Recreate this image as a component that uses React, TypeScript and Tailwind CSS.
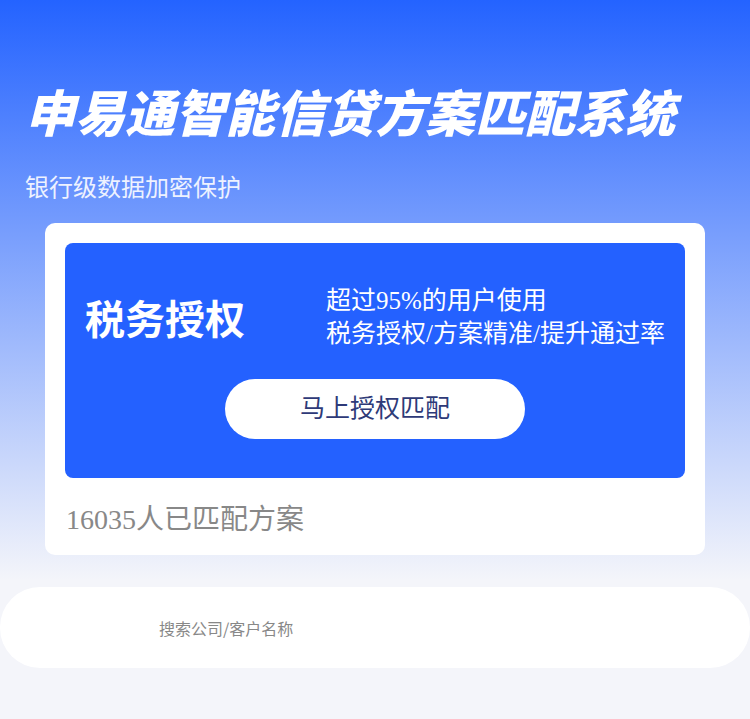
export default function App() {
  return (
    <div className="min-h-[719px] w-full bg-[#f4f5fa] bg-[linear-gradient(180deg,#2463ff_0px,#f4f5fa_580px)] font-['Liberation_Serif','Noto_Sans_CJK_SC',serif] pb-[50px]">
      {/* 标题区 */}
      <div className="px-[25px] pt-[82px]">
        <h1 className="text-[50px] leading-[56px] font-black italic text-white font-['Noto_Sans_CJK_SC',sans-serif]">
          申易通智能信贷方案匹配系统
        </h1>
        <p className="mt-[34px] text-[24px] leading-[28px] text-[#eef2ff] font-['Noto_Sans_CJK_SC',sans-serif]">
          银行级数据加密保护
        </p>
      </div>

      {/* 授权卡片 */}
      <div className="mx-[45px] mt-[23px] rounded-[10px] bg-white p-[20px] pb-[17px]">
        <div className="rounded-[8px] bg-[#2461ff] px-[20px] pt-[41px] pb-[39px]">
          <div className="flex items-center">
            <div className="w-[241px] text-[40px] leading-[48px] font-bold text-white font-['Noto_Sans_CJK_SC',sans-serif]">
              税务授权
            </div>
            <div className="text-[25px] leading-[33px] text-white">
              <div>超过95%的用户使用</div>
              <div>税务授权/方案精准/提升通过率</div>
            </div>
          </div>
          <button className="mx-auto mt-[29px] flex h-[60px] w-[300px] items-center justify-center rounded-full bg-white text-[25px] text-[#2e3a78]">
            马上授权匹配
          </button>
        </div>
        <div className="mt-[24px] pl-[1px] text-[28px] leading-[36px] text-[#888888]">
          16035人已匹配方案
        </div>
      </div>

      {/* 搜索栏 */}
      <div className="mt-[32px] flex h-[81px] items-center rounded-[40px] bg-white pl-[159px]">
        <span className="text-[16px] text-[#888888] font-['Noto_Sans_CJK_SC',sans-serif]">搜索公司/客户名称</span>
      </div>
    </div>
  );
}
